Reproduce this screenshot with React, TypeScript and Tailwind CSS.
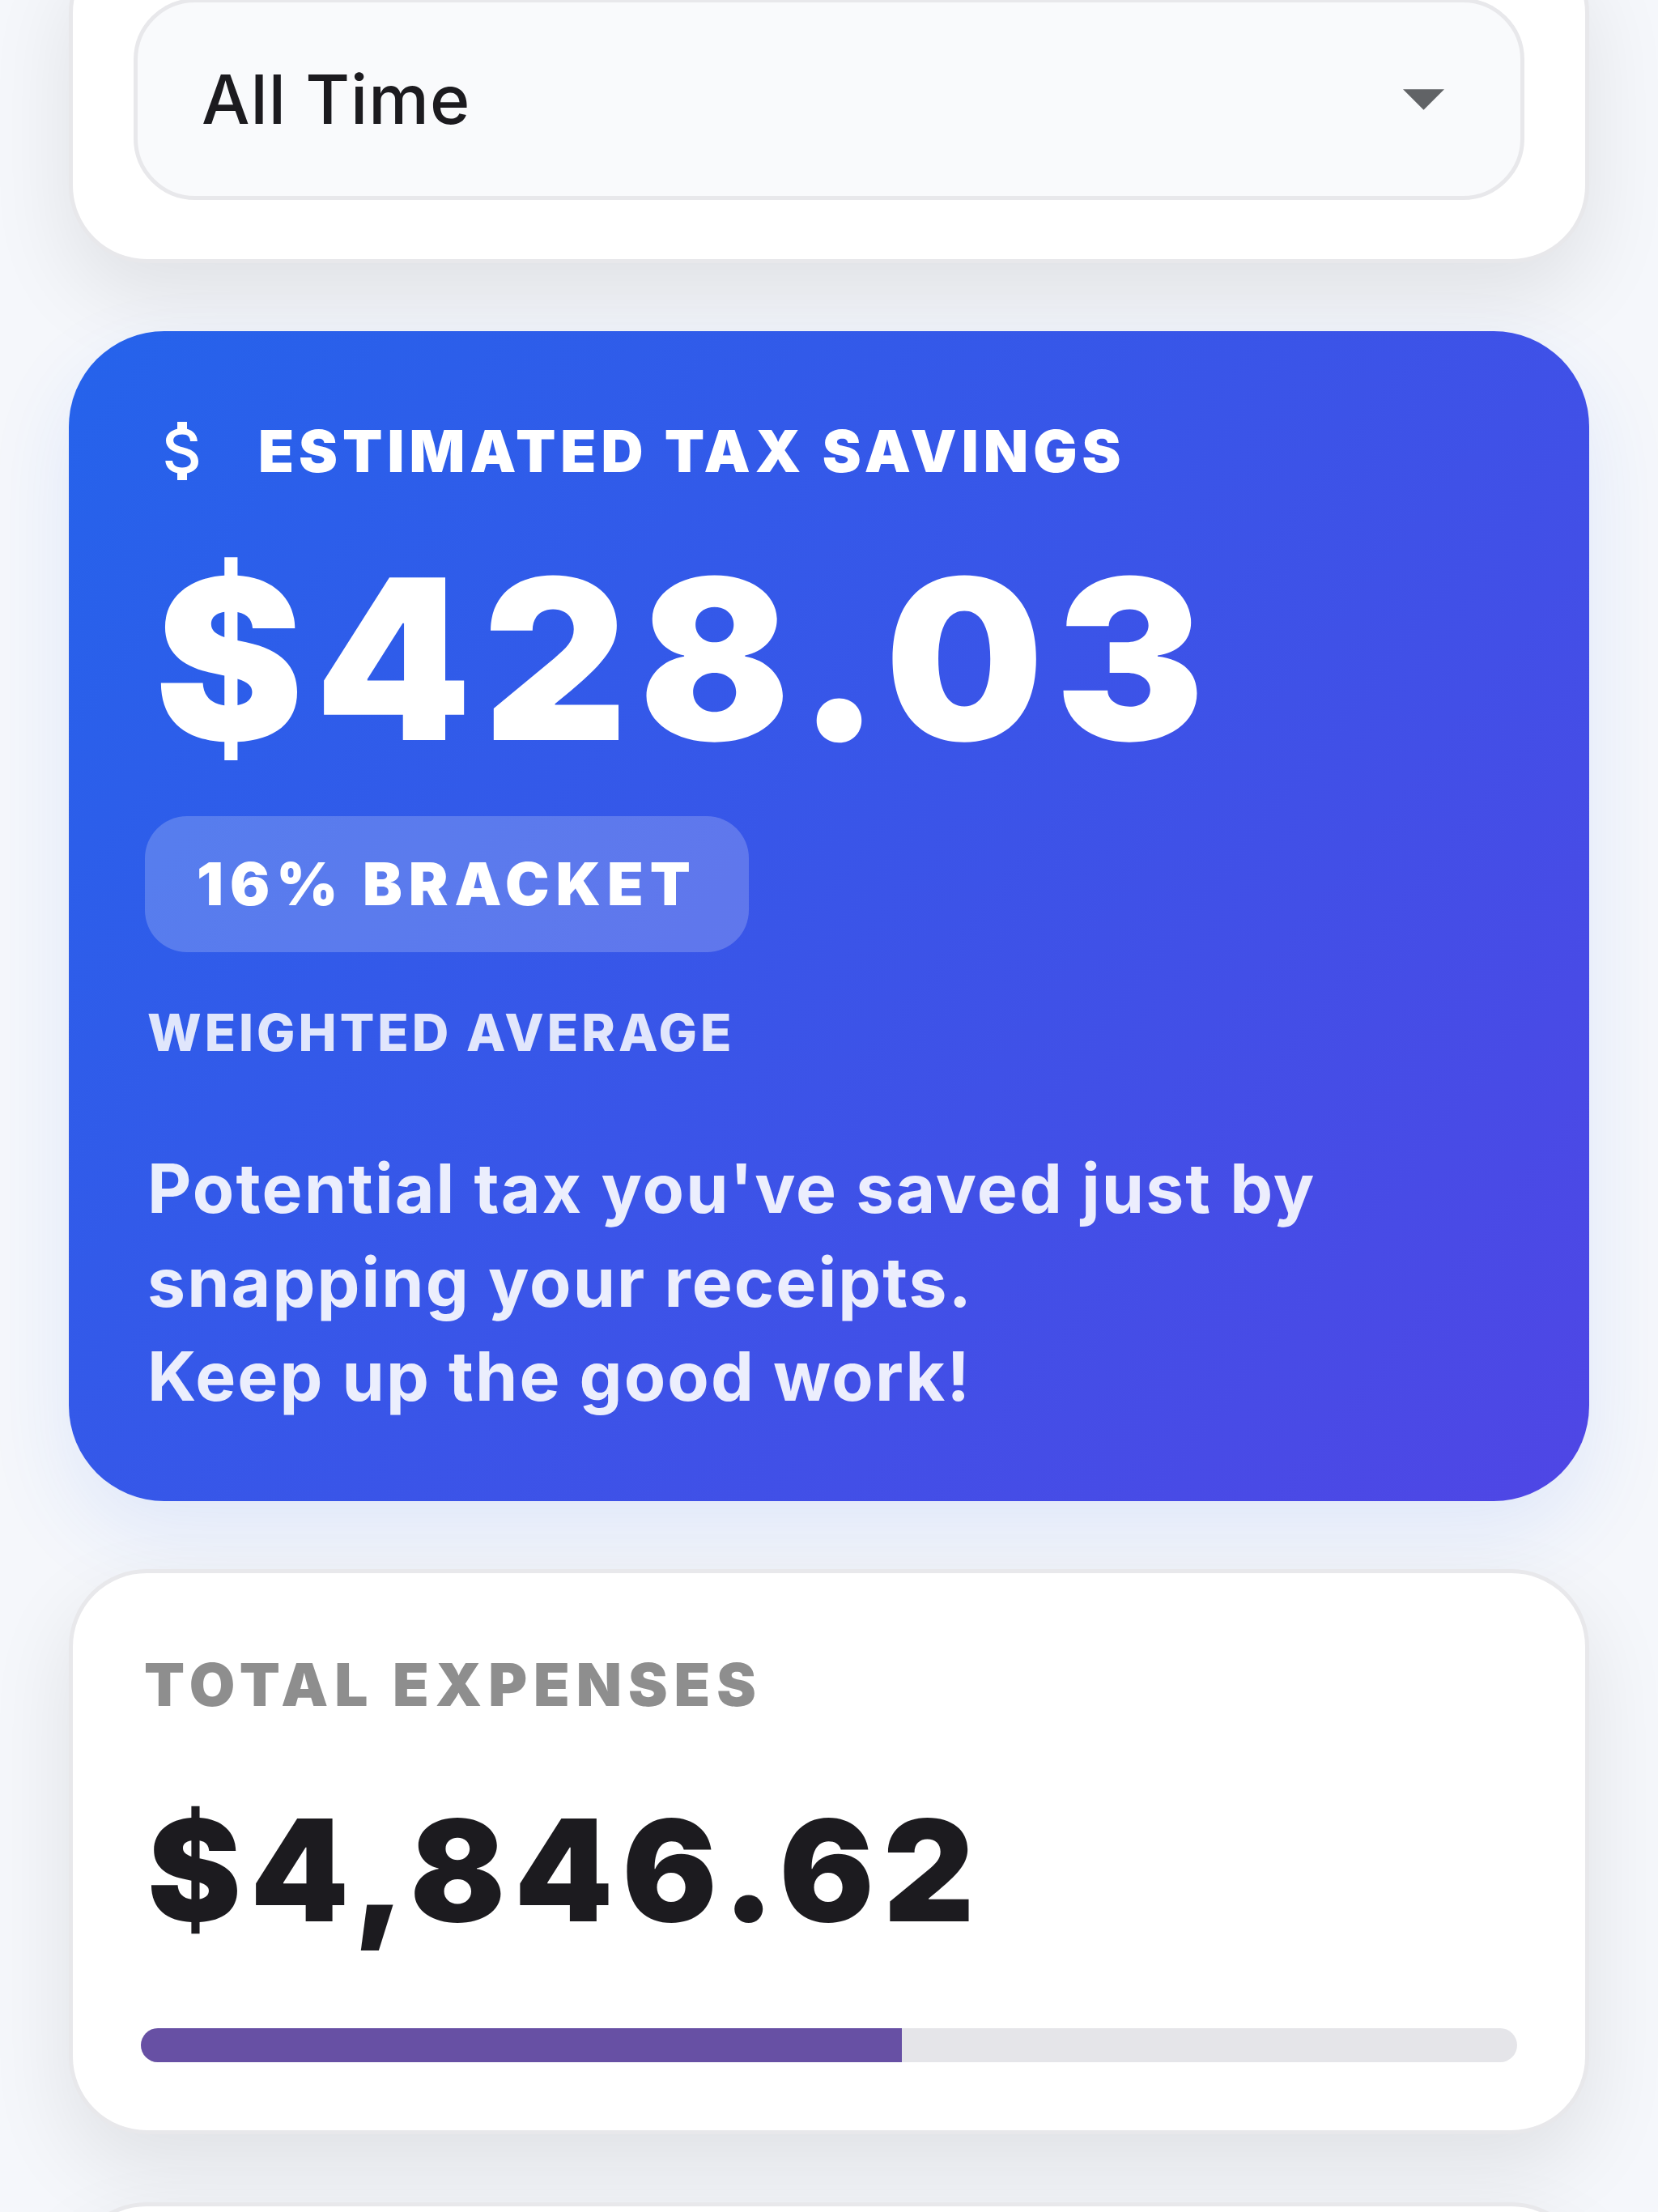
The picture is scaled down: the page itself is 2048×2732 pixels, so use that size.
import React from "react";

const cardClass =
  "rounded-[96px] border-[5px] border-[#e8e8eb] bg-white shadow-[0_42px_105px_rgba(0,0,0,0.09)]";

function PeriodFilter() {
  return (
    <section className={`${cardClass} -mt-20 px-[75px] py-[73px]`}>
      <div className="relative">
        <select
          aria-label="Period"
          defaultValue="all"
          className="block h-[249px] w-full appearance-none rounded-[76px] border-[5px] border-[#e8e8eb] bg-[#f9fafc] px-[79px] text-[84px] font-medium tracking-[1px] text-[#1c1b1f] outline-none"
        >
          <option value="all">All Time</option>
          <option value="year">This Year</option>
          <option value="month">This Month</option>
        </select>
        <svg
          viewBox="0 0 50 25"
          aria-hidden="true"
          className="pointer-events-none absolute right-[99px] top-28 h-[26px] w-[51px] fill-[#616366]"
        >
          <path d="M0 0h50L25 25z" />
        </svg>
      </div>
    </section>
  );
}

function MoneyIcon() {
  return (
    <svg viewBox="0 0 24 24" aria-hidden="true" className="size-24 shrink-0 fill-current">
      <path d="M11.8 10.9c-2.27-.59-3-1.2-3-2.15 0-1.09 1.01-1.85 2.7-1.85 1.78 0 2.44.85 2.5 2.1h2.21c-.07-1.72-1.12-3.3-3.21-3.81V3h-3v2.16c-1.94.42-3.5 1.68-3.5 3.61 0 2.31 1.91 3.46 4.7 4.13 2.5.6 3 1.48 3 2.41 0 .69-.49 1.79-2.7 1.79-2.06 0-2.87-.92-2.98-2.1h-2.2c.12 2.19 1.76 3.42 3.68 3.83V21h3v-2.15c1.95-.37 3.5-1.5 3.5-3.55 0-2.84-2.43-3.81-4.7-4.4z" />
    </svg>
  );
}

function SavingsCard() {
  return (
    <section className="flex flex-col items-start rounded-[118px] bg-[linear-gradient(128deg,#2563eb,#4f46e5)] px-[94px] pb-24 pt-[100px] text-white shadow-[0_42px_105px_rgba(37,99,235,0.1)]">
      <h2 className="flex items-center gap-11 text-[72px] font-black leading-[96px] tracking-[6px]">
        <MoneyIcon />
        ESTIMATED TAX SAVINGS
      </h2>
      <p className="mt-[42px] px-3 text-[276px] font-black leading-[334px] tracking-[14px]">$428.03</p>
      <p className="mt-[27px] rounded-[52px] bg-white/20 px-16 py-10 text-[73px] font-black leading-[88px] tracking-[8px]">
        16% BRACKET
      </p>
      <p className="mt-[54px] px-[3px] text-[63px] font-extrabold leading-[90px] tracking-[4px] text-white/85">
        WEIGHTED AVERAGE
      </p>
      <p className="mt-[90px] px-[3px] text-[84px] font-bold leading-[116px] tracking-wide text-white/90">
        Potential tax you've saved just by
        <br />
        snapping your receipts.
        <br />
        Keep up the good work!
      </p>
    </section>
  );
}

function ExpensesCard() {
  const share = 55.3;
  return (
    <section className={`${cardClass} px-[84px] pb-[84px] pt-[84px]`}>
      <h2 className="px-1 text-[73px] font-black leading-[108px] tracking-[8px] text-[#8e8e8e]">
        TOTAL EXPENSES
      </h2>
      <p className="mt-[70px] px-2 text-[174px] font-black leading-[210px] tracking-[11px] text-[#1c1b1f]">
        $4,846.62
      </p>
      <div className="mt-[90px] h-[42px] overflow-hidden rounded-full bg-[#e5e5e9]">
        <div className="h-full bg-[#6750a4]" style={{ width: `${share}%` }} />
      </div>
    </section>
  );
}

export default function App() {
  return (
    <main className="flex h-screen flex-col gap-[84px] overflow-hidden bg-[#f5f7fb] px-[85px] font-['Inter',sans-serif] *:shrink-0">
      <PeriodFilter />
      <SavingsCard />
      <ExpensesCard />
      <section className={`${cardClass} h-[698px]`} />
    </main>
  );
}
